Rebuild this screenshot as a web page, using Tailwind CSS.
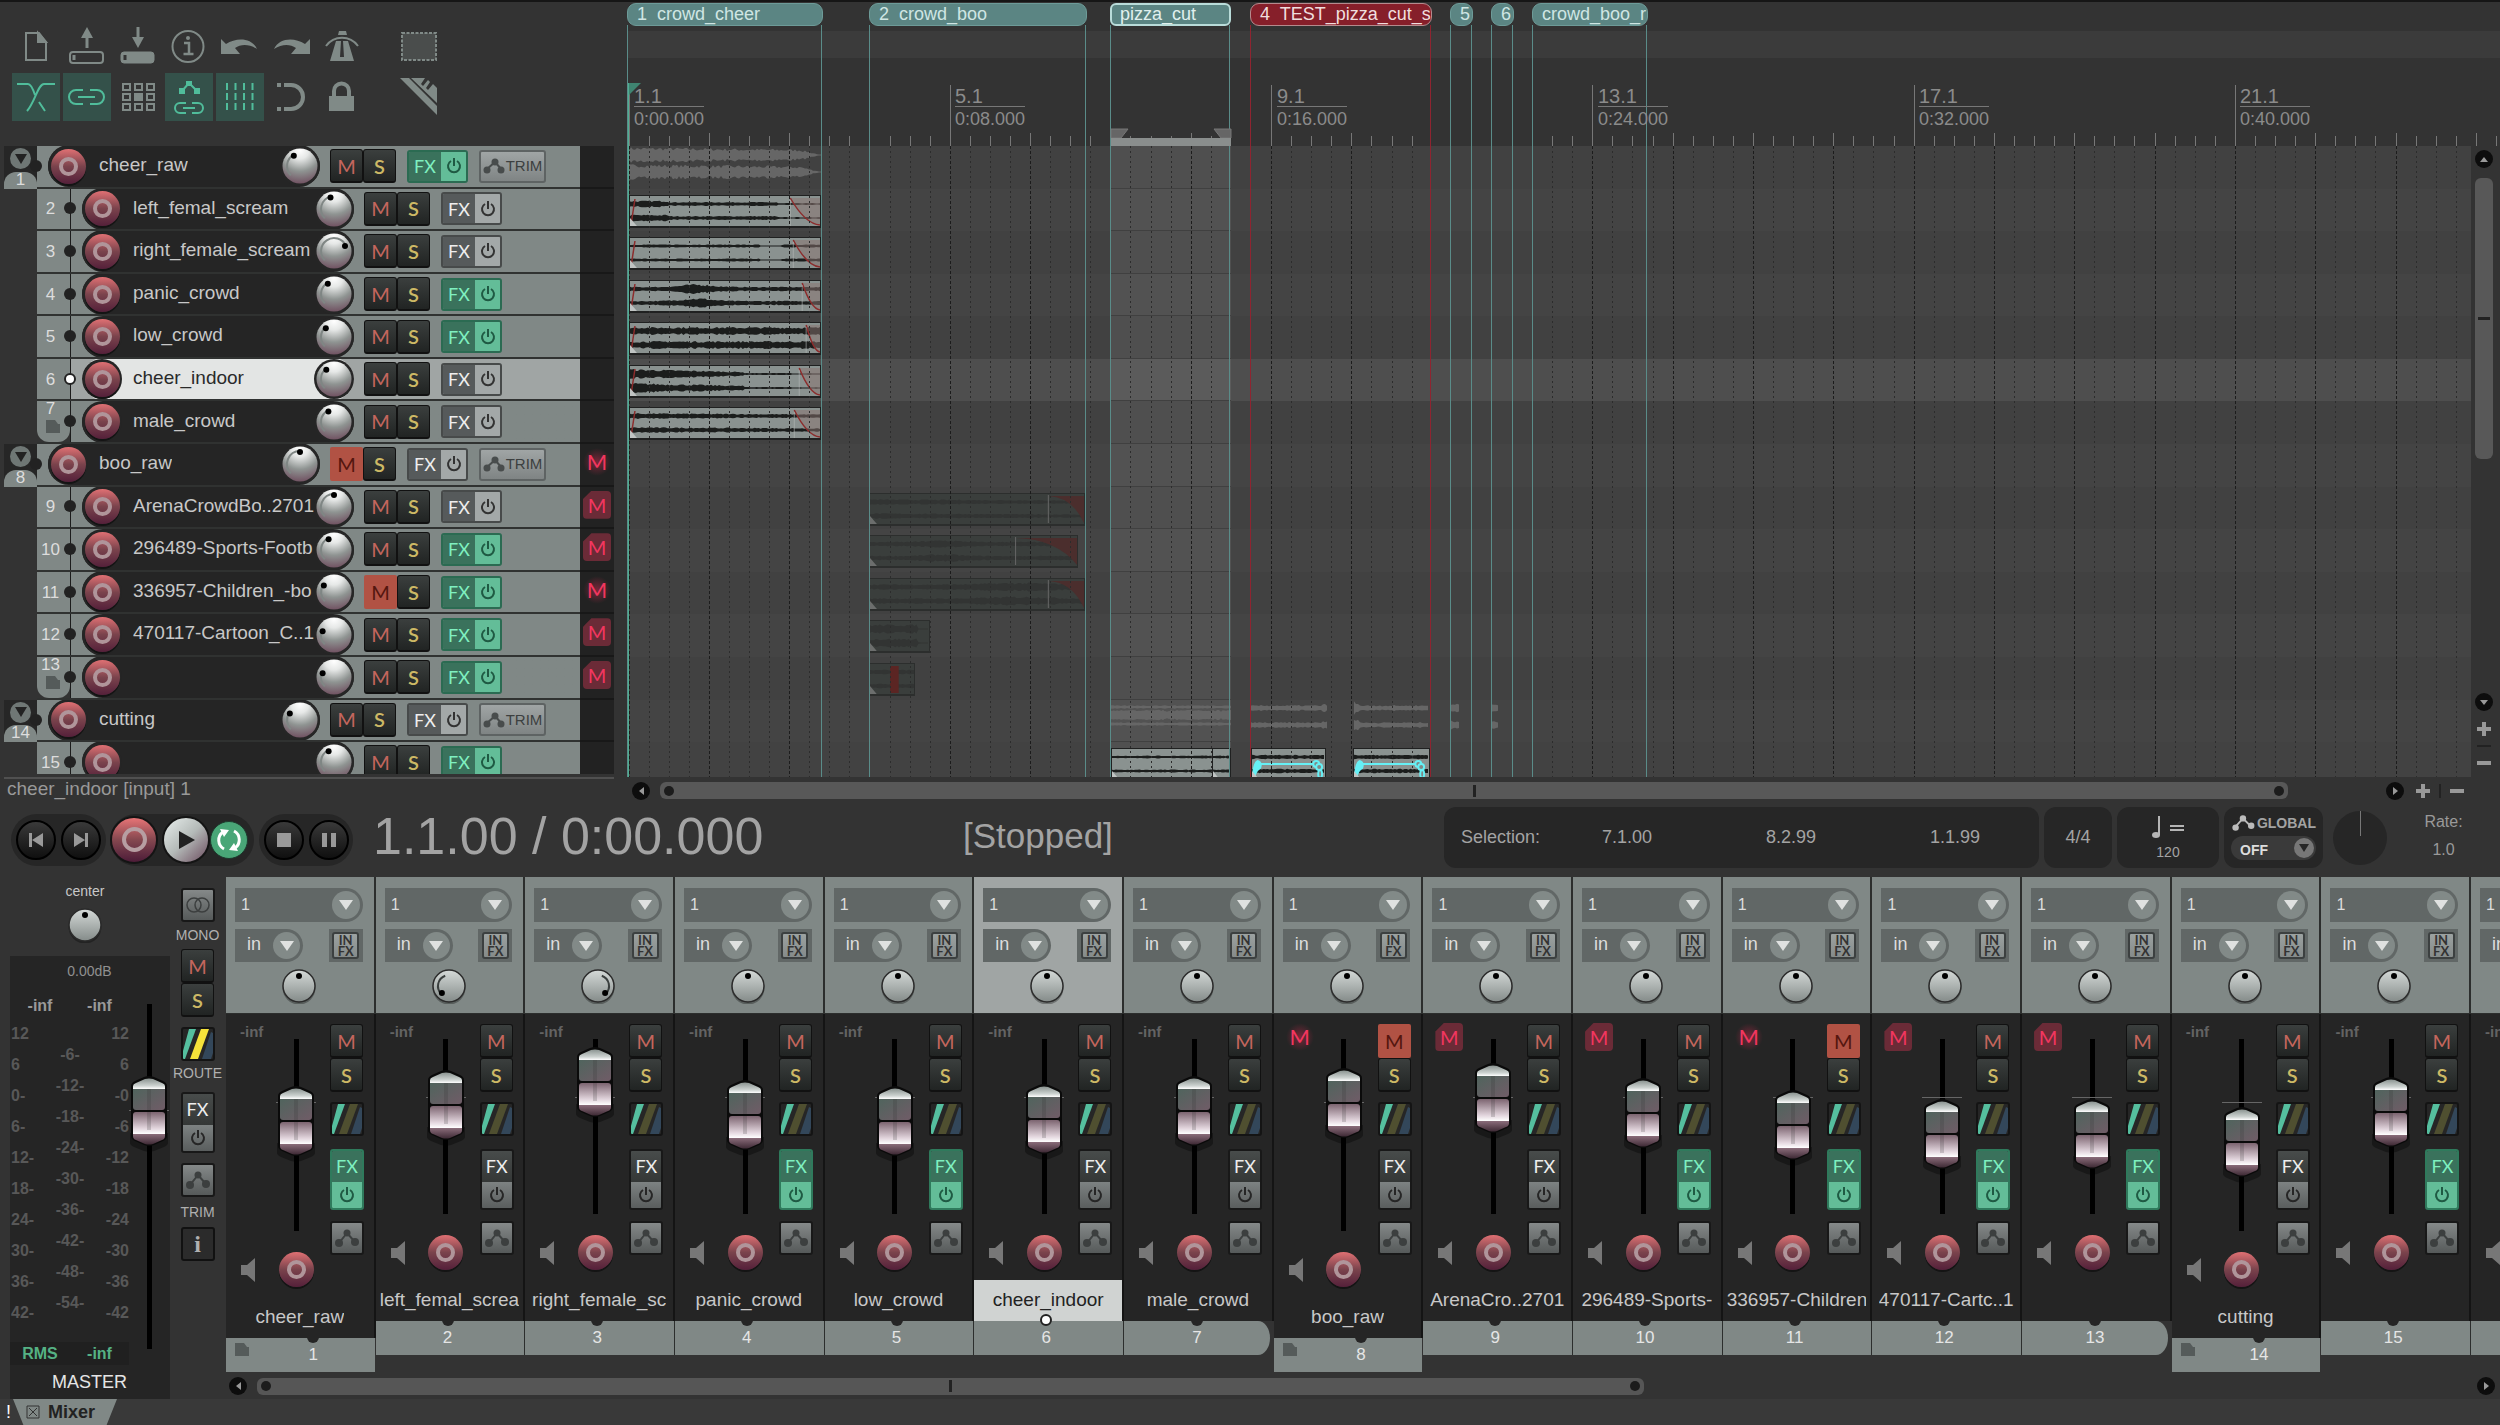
<!DOCTYPE html>
<html lang="en">

<head>
    <meta charset="UTF-8">
    <meta name="viewport" content="width=device-width, initial-scale=1.0">
    <title>Mixer</title>
    <script src="https://cdn.jsdelivr.net/npm/@tailwindcss/browser@4"></script>
</head>

<body class="h-screen overflow-hidden flex flex-col bg-[#333333] text-[#c8c8c8] font-['Liberation_Sans',Arial,sans-serif] border-t-2 border-[#161616]">
    <!-- Shared gradients -->
    <svg class="absolute size-0" aria-hidden="true">
        <defs>
            <radialGradient id="ball" cx="50%" cy="5%" r="100%">
                <stop offset="0" stop-color="#ffffff" />
                <stop offset=".25" stop-color="#e6e8e7" />
                <stop offset=".6" stop-color="#8f9492" />
                <stop offset="1" stop-color="#6d4a5c" />
            </radialGradient>
            <linearGradient id="silver" x1="0" y1="0" x2="0" y2="1">
                <stop offset="0" stop-color="#d5dad8" />
                <stop offset="1" stop-color="#848b89" />
            </linearGradient>
            <linearGradient id="capTop" x1="0" y1="0" x2="0" y2="1">
                <stop offset="0" stop-color="#8a9390" />
                <stop offset=".7" stop-color="#cdd3d1" />
                <stop offset="1" stop-color="#ffffff" />
            </linearGradient>
            <linearGradient id="capGlass" x1="0" y1="0" x2="1" y2="1">
                <stop offset="0" stop-color="#50645d" />
                <stop offset="1" stop-color="#705c67" />
            </linearGradient>
            <linearGradient id="capLow" x1="0" y1="0" x2="0" y2="1">
                <stop offset="0" stop-color="#7c6470" />
                <stop offset=".75" stop-color="#e3d6de" />
                <stop offset="1" stop-color="#ffffff" />
            </linearGradient>
            <linearGradient id="capEnd" x1="0" y1="0" x2="0" y2="1">
                <stop offset="0" stop-color="#8a6c7a" />
                <stop offset="1" stop-color="#3e2a35" />
            </linearGradient>
        </defs>
    </svg>

    <!-- Arrange view -->
    <main class="flex-1 min-h-0 flex">
        <div class="w-[627px] shrink-0 flex flex-col">
            <!-- Toolbar -->
            <div class="h-[144px] shrink-0 pl-3 pt-5 flex flex-col gap-[3px] text-[#808a87]">
                <div class="flex gap-[3px]">
                    <button class="size-12" aria-label="New project"><svg viewBox="0 0 48 48" fill="none" stroke="currentColor" stroke-width="2"><path d="M14 11h13l7 9v18H14z" /><path d="M26 11v9h8z" fill="currentColor" /></svg></button>
                    <button class="size-12" aria-label="Open project"><svg viewBox="0 0 48 48" fill="none" stroke="currentColor" stroke-width="2"><rect x="7" y="30" width="33" height="11" rx="3" /><path d="M11 33v5M24 26V14" stroke-width="3" /><path d="M24 5l6 11H18z" fill="currentColor" stroke="none" /></svg></button>
                    <button class="size-12" aria-label="Save project"><svg viewBox="0 0 48 48" fill="none" stroke="currentColor" stroke-width="3"><rect x="7" y="30" width="33" height="11" rx="3" fill="currentColor" stroke-width="1" /><path d="M11 33v5" stroke="#333" /><path d="M24 5v12" /><path d="M24 26l6-11H18z" fill="currentColor" stroke="none" /></svg></button>
                    <button class="size-12" aria-label="Project settings"><svg viewBox="0 0 48 48" fill="none" stroke="currentColor" stroke-width="2"><circle cx="23" cy="24.500" r="15.500" /><path d="M19 21h5v10M18.500 32h10" stroke-width="2.500" /><circle cx="23" cy="16" r="2" fill="currentColor" stroke="none" /></svg></button>
                    <button class="size-12" aria-label="Undo"><svg viewBox="0 0 48 48" fill="currentColor"><path d="M5 17l5 5c11-7 26-6 31 5-8-5-16-5-22-1l5 6H5z" /></svg></button>
                    <button class="size-12" aria-label="Redo"><svg viewBox="0 0 48 48" fill="currentColor"><path d="M43 17l-5 5C27 15 12 16 7 27c8-5 16-5 22-1l-5 6h19z" /></svg></button>
                    <button class="size-12" aria-label="Metronome"><svg viewBox="0 0 48 48" fill="currentColor"><path d="M21 9h7l1 4h-9zM18 19h5l-1 16h4l-1-16h5l6 20H12z" /><path d="M8 24c8-11 24-11 32 0" fill="none" stroke="currentColor" stroke-width="2" /></svg></button>
                    <span class="w-[22px]"></span>
                    <button class="size-12" aria-label="Marquee selection"><svg viewBox="0 0 48 48" fill="#4a4d4c" stroke="currentColor" stroke-width="2" stroke-dasharray="3 1.500"><path d="M8 11h34v27H8z" /></svg></button>
                </div>
                <div class="flex gap-[3px]">
                    <button class="size-12 bg-[#34514a] text-[#50bd9b]" aria-label="Auto crossfade"><svg viewBox="0 0 48 48" fill="none" stroke="currentColor" stroke-width="2"><path d="M5 11h11c3 0 5 5 7 11M27 29l6 9M43 11H32c-6 0-9 18-17 27" /></svg></button>
                    <button class="size-12 bg-[#34514a] text-[#50bd9b]" aria-label="Item grouping"><svg viewBox="0 0 48 48" fill="none" stroke="currentColor" stroke-width="2"><path d="M20 17h-7a7 7 0 000 14h7M27 17h7a7 7 0 010 14h-7M15 24h17" /></svg></button>
                    <button class="size-12" aria-label="Ripple editing"><svg viewBox="0 0 48 48" fill="none" stroke="currentColor" stroke-width="2"><path d="M9 11h7v6H9zM21 11h7v6h-7zM33 11h7v6h-7zM9 21h7v6H9zM33 21h7v6h-7zM9 31h7v6H9zM21 31h7v6h-7zM33 31h7v6h-7z" /><path d="M20 20h9v8h-9z" fill="currentColor" stroke="none" /></svg></button>
                    <button class="size-12 bg-[#34514a] text-[#50bd9b]" aria-label="Move envelopes with items"><svg viewBox="0 0 48 48" fill="none" stroke="currentColor" stroke-width="2"><path d="M17 18l7-8 8 8" /><path d="M14 15h6v6h-6zM21 8h6v5h-6zM29 15h6v6h-6z" fill="currentColor" stroke="none" /><path d="M21 30h-6a5 5 0 000 10h6M27 30h6a5 5 0 010 10h-6M18 35h12" /></svg></button>
                    <button class="size-12 bg-[#34514a] text-[#50bd9b]" aria-label="Grid lines"><svg viewBox="0 0 48 48" fill="none" stroke="currentColor" stroke-width="2" stroke-dasharray="7 3"><path d="M11 10v28M19.500 10v28M28 10v28M36.500 10v28" /></svg></button>
                    <button class="size-12" aria-label="Snap"><svg viewBox="0 0 48 48" fill="none" stroke="currentColor" stroke-width="4"><path d="M10 12h4M10 36h4M17 12h7a12 12 0 010 24h-7" /></svg></button>
                    <button class="size-12" aria-label="Lock"><svg viewBox="0 0 48 48" fill="currentColor"><path d="M11 23h25v15H11z" /><path d="M16 24v-6a7.500 7.500 0 0115 0v6" fill="none" stroke="currentColor" stroke-width="4" /></svg></button>
                    <span class="w-[22px]"></span>
                    <button class="size-12" aria-label="Actions"><svg viewBox="0 0 48 48" fill="currentColor"><path d="M6 5l37 37V33L15 5zM17 5h14l-4 6 2 2 5-6 2 2-4 6 2 2 5-6 4 4v15z" /></svg></button>
                </div>
            </div>
            <!-- Track panel -->
            <div class="flex-1 min-h-0 ml-1 w-[610px] mb-[3px] flex flex-col bg-[#333]" id="tracks"></div>
        </div>

        <!-- Timeline -->
        <div class="flex-1 min-w-0 flex flex-col relative overflow-hidden">
            <div class="h-[29px] shrink-0"></div>
            <div class="h-[27px] shrink-0 bg-[#3b3b3b]"></div>
            <div class="h-[88px] shrink-0"></div>
            <div class="flex-1 min-h-0 flex">
                <div class="flex-1 min-w-0 flex flex-col relative overflow-hidden" id="lanes"></div>
                <div class="w-[29px] shrink-0 flex flex-col items-center" id="vscroll">
                    <button class="mt-1 mr-1 size-[18px] rounded-full bg-[#0d0d0d] grid place-items-center" aria-label="Scroll up"><span class="border-x-4 border-x-transparent border-b-5 border-b-[#999]"></span></button>
                    <div class="mt-[10px] mr-1 w-[18px] h-[281px] rounded-md bg-[#585858] grid place-items-center"><span class="w-3 h-[3px] bg-[#222]"></span></div>
                    <span class="flex-1"></span>
                    <button class="mr-1 size-[18px] rounded-full bg-[#0d0d0d] grid place-items-center" aria-label="Scroll down"><span class="border-x-4 border-x-transparent border-t-5 border-t-[#999]"></span></button>
                    <button class="mt-[10px] mr-1 w-4 h-4" aria-label="Zoom in vertically"><svg viewBox="0 0 16 16"><path d="M8 1v14M1 8h14" stroke="#999" stroke-width="4" /></svg></button>
                    <span class="mt-2 mr-1 w-[14px] h-[2px] bg-[#222]"></span>
                    <button class="mt-2 mb-[6px] mr-1 w-4 h-4" aria-label="Zoom out vertically"><svg viewBox="0 0 16 16"><path d="M1 8h14" stroke="#999" stroke-width="4" /></svg></button>
                </div>
            </div>
            <div class="absolute inset-0 pointer-events-none" id="ruler"></div>
        </div>
    </main>

    <!-- Status line and horizontal scroll -->
    <div class="h-[23px] shrink-0 flex items-center">
        <div class="w-[610px] ml-1 pl-[3px] border-t-2 border-[#505050] -mt-px text-[19px] leading-[20px] text-[#999]">cheer_indoor [input] 1</div>
        <button class="ml-[18px] mt-1 size-[18px] rounded-full bg-[#0d0d0d] grid place-items-center" aria-label="Scroll left"><span class="border-y-4 border-y-transparent border-r-5 border-r-[#999]"></span></button>
        <div class="ml-[10px] mt-1 flex-1 h-[17px] rounded-md bg-[#585858] flex items-center justify-between px-1">
            <span class="size-[10px] rounded-full bg-[#1c1c1c]"></span><span class="w-[3px] h-3 bg-[#222]"></span><span class="size-[10px] rounded-full bg-[#1c1c1c]"></span>
        </div>
        <button class="ml-[98px] mt-1 size-[18px] rounded-full bg-[#0d0d0d] grid place-items-center" aria-label="Scroll right"><span class="border-y-4 border-y-transparent border-l-5 border-l-[#999]"></span></button>
        <button class="ml-[11px] mt-1 size-4" aria-label="Zoom in"><svg viewBox="0 0 16 16"><path d="M8 1v14M1 8h14" stroke="#999" stroke-width="4" /></svg></button>
        <span class="ml-2 mt-1 w-[2px] h-[14px] bg-[#222]"></span>
        <button class="ml-2 mr-[35px] mt-1 size-4" aria-label="Zoom out"><svg viewBox="0 0 16 16"><path d="M1 8h14" stroke="#999" stroke-width="4" /></svg></button>
    </div>

    <!-- Transport -->
    <div class="h-[77px] shrink-0 flex items-center pb-[2px]">
        <div class="ml-[11px] h-[52px] w-[95px] rounded-full bg-[#262626] flex items-center gap-[5px] pl-[5px] mt-1">
            <button class="size-10 rounded-full bg-linear-to-b from-[#3a3a3a] to-[#101010] border-2 border-black grid place-items-center" aria-label="Go to start"><svg class="size-4" viewBox="0 0 16 16" fill="#999"><path d="M1 1h3v14H1zM15 1v14L4 8z" /></svg></button>
            <button class="size-10 rounded-full bg-linear-to-b from-[#3a3a3a] to-[#101010] border-2 border-black grid place-items-center" aria-label="Go to end"><svg class="size-4" viewBox="0 0 16 16" fill="#999"><path d="M12 1h3v14h-3zM1 1v14l11-7z" /></svg></button>
        </div>
        <div class="ml-1 h-[52px] w-[144px] rounded-full bg-[#262626] flex items-center mt-1">
            <button class="size-12 shrink-0 rounded-full bg-linear-to-b from-[#e87476] via-[#84474f] to-[#4d1c38] border-2 border-[#141414] grid place-items-center" aria-label="Record"><span class="size-[25px] rounded-full border-4 border-[#b79ea2]"></span></button>
            <button class="ml-1 size-12 shrink-0 rounded-full bg-linear-to-br from-[#e9efed] via-[#b4bab8] to-[#6b4e60] border-2 border-[#141414] grid place-items-center" aria-label="Play"><svg class="size-5" viewBox="0 0 20 20" fill="#222"><path d="M3 1l16 9-16 9z" /></svg></button>
            <button class="size-[38px] shrink-0 rounded-full bg-[#49a677] border border-[#1d3a2d] grid place-items-center" aria-label="Repeat"><svg class="size-7" viewBox="0 0 28 28" fill="none" stroke="#fff" stroke-width="3"><path d="M19 5a10 10 0 011 17M9 23A10 10 0 018 6" /><path d="M5 3l9 1-5 7zM23 25l-9-1 5-7z" fill="#fff" stroke="none" /></svg></button>
        </div>
        <div class="ml-[5px] h-[52px] w-[94px] rounded-full bg-[#262626] flex items-center gap-[5px] pl-[5px] mt-1">
            <button class="size-10 rounded-full bg-linear-to-b from-[#3a3a3a] to-[#101010] border-2 border-black grid place-items-center" aria-label="Stop"><span class="size-[14px] bg-[#999]"></span></button>
            <button class="size-10 rounded-full bg-linear-to-b from-[#3a3a3a] to-[#101010] border-2 border-black grid place-items-center" aria-label="Pause"><span class="w-[14px] h-[14px] border-x-5 border-[#999]"></span></button>
        </div>
        <div class="ml-5 w-[590px] shrink-0 pb-1 text-[52px] leading-none text-[#a3a3a3]">1.1.00 / 0:00.000</div>
        <div class="pb-1 text-[35px] leading-none text-[#a3a3a3]">[Stopped]</div>
        <div class="flex-1"></div>
        <div class="flex gap-[5px] text-[18px] text-[#a3a3a3]">
            <div class="h-[61px] w-[595px] rounded-xl bg-[#262626] flex items-center pl-[17px]">
                <span class="w-[84px]">Selection:</span><span class="w-[164px] text-center">7.1.00</span><span class="w-[164px] text-center">8.2.99</span><span class="w-[164px] text-center">1.1.99</span>
            </div>
            <div class="h-[61px] w-[68px] rounded-xl bg-[#262626] grid place-items-center">4/4</div>
            <div class="h-[61px] w-[102px] rounded-xl bg-[#262626] flex flex-col items-center justify-center text-[14px] leading-4 gap-[6px]">
                <svg class="w-[34px] h-[22px]" viewBox="0 0 34 22"><ellipse cx="5" cy="19" rx="4" ry="3" fill="#b5b5b5" /><path d="M8 19V0M19 10h14M19 14h14" stroke="#b5b5b5" stroke-width="2" /></svg>
                <span>120</span>
            </div>
            <div class="h-[61px] w-[99px] rounded-xl bg-[#262626] px-[7px] pt-[7px] font-['Liberation_Sans_Narrow','Liberation_Sans',sans-serif] font-bold">
                <div class="flex items-center gap-[2px] text-[14px] leading-[18px]"><svg class="w-[26px] h-[18px]" viewBox="0 0 26 18"><path d="M5 13l8-9 8 8" stroke="#bbb" stroke-width="2" fill="none" /><g fill="#bbb"><circle cx="5" cy="14" r="3.500" /><circle cx="13" cy="4" r="3.500" /><circle cx="22" cy="12" r="3.500" /></g></svg>GLOBAL</div>
                <div class="relative mt-1 h-6 rounded-full bg-[#3a3a3a]">
                    <select class="w-full h-6 pl-[9px] text-[14px] text-[#ddd] appearance-none" aria-label="Global automation override"><option>OFF</option></select>
                    <span class="absolute right-[2px] top-[2px] size-5 rounded-full bg-[#777] grid place-items-center pointer-events-none"><span class="border-x-5 border-x-transparent border-t-8 border-t-[#262626]"></span></span>
                </div>
            </div>
        </div>
        <div class="relative ml-[10px] size-[54px] rounded-full bg-[#262626] flex justify-center"><span class="w-px h-[25px] bg-[#777]"></span><input type="range" class="absolute inset-0 w-full opacity-0" aria-label="Play rate"></div>
        <div class="w-[113px] pb-1 text-center text-[16px] leading-7 text-[#999]">Rate:<br>1.0</div>
    </div>

    <!-- Mixer -->
    <section class="h-[522px] shrink-0 flex">
        <div class="w-[226px] shrink-0 flex">
            <div class="w-[170px] flex flex-col">
                <div class="h-[79px] flex flex-col items-center pt-1">
                    <span class="text-[14px] leading-5">center</span>
                    <div class="mt-[6px]" id="masterpan"></div>
                </div>
                <div class="ml-[10px] flex-1 bg-[#252525] relative flex">
                    <div class="w-[119px] flex flex-col pt-[7px]">
                        <div class="text-[14px] leading-4 text-[#909090] text-center pl-10">0.00dB</div>
                        <div class="flex mt-[18px] text-[16px] leading-[18px] font-bold text-[#999]"><span class="w-[60px] text-center">-inf</span><span class="w-[59px] text-center">-inf</span></div>
                        <div class="flex justify-between mt-[3px] pl-px text-[16px] font-bold text-[#585858]" id="scale"></div>
                        <div class="mt-auto h-[23px] bg-[#202020] flex items-center text-[16px] font-bold text-[#55b184]"><span class="w-[60px] text-center">RMS</span><span class="w-[59px] text-center">-inf</span></div>
                        <div class="text-[18px] leading-[34px] text-[#e5e5e5] text-center pl-10">MASTER</div>
                    </div>
                    <div class="w-10 pt-12" id="masterfader"></div>
                </div>
            </div>
            <div class="ml-[10px] w-[35px] flex flex-col items-center pt-[11px] font-['Liberation_Sans_Narrow','Liberation_Sans',sans-serif] text-[14px] text-[#b0b0b0]" id="masterbuttons"></div>
        </div>
        <div class="flex-1 min-w-0 flex flex-col">
            <div class="h-[495px] flex items-start" id="strips"></div>
            <div class="mt-1 flex items-center h-5">
                <button class="ml-[3px] size-[18px] rounded-full bg-[#0d0d0d] grid place-items-center" aria-label="Scroll mixer left"><span class="border-y-4 border-y-transparent border-r-5 border-r-[#999]"></span></button>
                <div class="ml-[10px] w-[61%] h-[17px] rounded-md bg-[#565656] flex items-center justify-between px-1">
                    <span class="size-[10px] rounded-full bg-[#1c1c1c]"></span><span class="w-[3px] h-3 bg-[#222]"></span><span class="size-[10px] rounded-full bg-[#1c1c1c]"></span>
                </div>
                <span class="flex-1"></span>
                <button class="mr-[5px] size-[18px] rounded-full bg-[#0d0d0d] grid place-items-center" aria-label="Scroll mixer right"><span class="border-y-4 border-y-transparent border-l-5 border-l-[#999]"></span></button>
            </div>
        </div>
    </section>

    <!-- Docker tabs -->
    <div class="h-[26px] shrink-0 bg-[#393939] flex items-center">
        <span class="w-[13px] pl-[6px] text-[18px] text-white">!</span>
        <button class="w-[104px] h-[26px] bg-[#808886] [clip-path:polygon(0_0,100%_0,90%_100%,10%_100%)] flex items-center pl-[13px] gap-2 text-[18px] font-bold text-[#222]">
            <svg class="size-[14px]" viewBox="0 0 14 14" fill="none" stroke="#333"><path d="M1 1h12v12H1zM3 3l8 8M11 3l-8 8" /></svg>Mixer
        </button>
    </div>

    <script>
        // vol = track panel knob angle, cap = fader cap offset on its rail
        const tracks = [
            { n: 1, name: 'cheer_raw', folder: true, vol: -31, cap: 46, fx: true },
            { n: 2, name: 'left_femal_scream', vol: -17, cap: 30, pan: -135 },
            { n: 3, name: 'right_female_scream', short: 'right_female_sc', vol: 66, cap: 7, pan: 135 },
            { n: 4, name: 'panic_crowd', vol: -31, cap: 40, fx: true },
            { n: 5, name: 'low_crowd', vol: -43, cap: 46, fx: true },
            { n: 6, name: 'cheer_indoor', vol: -40, cap: 44, selected: true },
            { n: 7, name: 'male_crowd', vol: -28, cap: 36, last: true },
            { n: 8, name: 'boo_raw', folder: true, vol: 0, cap: 28, muted: true },
            { n: 9, name: 'ArenaCrowdBo', tail: '..2701', short: 'ArenaCro', vol: 0, cap: 23, implied: true },
            { n: 10, name: '296489-Sports-Footb', short: '296489-Sports-', vol: -27, cap: 38, fx: true, implied: true },
            { n: 11, name: '336957-Children_-bo', short: '336957-Children', vol: -58, cap: 50, fx: true, muted: true },
            { n: 12, name: '470117-Cartoon_C', tail: '..1', short: '470117-Cartc', vol: -72, cap: 59, fx: true, implied: true },
            { n: 13, name: '', vol: -72, cap: 59, fx: true, implied: true, last: true },
            { n: 14, name: 'cutting', folder: true, vol: -58, cap: 67 },
            { n: 15, name: '', vol: -27, cap: 37, fx: true },
            { n: 16, name: '', vol: 0, cap: 37, fx: true, cut: true },
        ];

        const rec = (n) => `<button class="size-[35px] shrink-0 rounded-full bg-linear-to-b from-[#e07073] via-[#7a434c] to-[#55203a] shadow-[0_2px_0_#141414] grid place-items-center" aria-label="Record arm track ${n}"><span class="size-[19px] rounded-full border-4 border-[#b0959a]"></span></button>`;

        function polar(c, r, deg) {
            const a = (deg - 90) * Math.PI / 180;
            return `${(c + r * Math.cos(a)).toFixed(1)} ${(c + r * Math.sin(a)).toFixed(1)}`;
        }

        function volKnob(n, deg) {
            const [x, y] = polar(20, 12, deg).split(' ');
            const big = deg > 45 ? 1 : 0;
            return `<span class="relative size-10 shrink-0"><svg viewBox="0 0 40 40"><circle cx="20" cy="20" r="20" fill="#262626" /><circle cx="20" cy="20" r="17.500" fill="url(#ball)" />
                <path d="M${polar(20, 13, -135)}A13 13 0 ${big} 1 ${polar(20, 13, deg)}" fill="none" stroke="#7f8684" stroke-width="2" /><circle cx="${x}" cy="${y}" r="3" fill="#000" /></svg>
                <input type="range" class="absolute inset-0 w-full opacity-0" aria-label="Volume track ${n}"></span>`;
        }

        function panKnob(label, deg) {
            const mark = deg
                ? `<path d="M${polar(18, 11, deg > 0 ? 20 : -20)}A11 11 0 0 ${deg > 0 ? 1 : 0} ${polar(18, 11, deg)}" fill="none" stroke="#3a3f3e" stroke-width="2" />`
                : '';
            const [x, y] = polar(18, 10, deg || 0).split(' ');
            return `<span class="relative block size-9"><svg viewBox="0 0 36 36"><circle cx="18" cy="20" r="16.500" fill="#000" opacity=".3" /><circle cx="18" cy="18" r="16" fill="url(#silver)" stroke="#2b2b2b" stroke-width="1.500" />${mark}<circle cx="${x}" cy="${y}" r="3" fill="#000" /></svg>
                <input type="range" class="absolute inset-0 w-full opacity-0" aria-label="${label}"></span>`;
        }

        const power = '<svg class="size-4" viewBox="0 0 16 16" fill="none" stroke="currentColor" stroke-width="2"><path d="M5 3a6 6 0 106 0M8 0v8" /></svg>';
        const envelope = '<svg class="w-6 h-[18px]" viewBox="0 0 24 18" fill="#3c3f3f"><path d="M4 14l8-10 8 9" fill="none" stroke="#3c3f3f" stroke-width="2" /><circle cx="4" cy="14" r="4" /><circle cx="12" cy="4" r="3.500" /><circle cx="20" cy="13" r="4" /></svg>';

        const muteBtn = (on) => `<button class="${on
            ? 'w-[33px] h-[34px] shrink-0 rounded-[2px] bg-[#b15244] text-[#54160f] text-[20px] leading-none font-[Lato,sans-serif]'
            : 'w-[33px] h-[34px] shrink-0 rounded-[3px] bg-linear-to-b from-[#3b3f3e] to-[#212423] border border-[#111] border-b-2 text-[#c4665d] text-[20px] leading-none font-[Lato,sans-serif]'}">M</button>`;
        const soloBtn = '<button class="w-[33px] h-[34px] shrink-0 rounded-[3px] bg-linear-to-b from-[#3b3f3e] to-[#212423] border border-[#111] border-b-2 text-[#cdb965] text-[20px] leading-none font-semibold font-[Lato,sans-serif]">S</button>';

        const fxRow = (on) => `<div class="${on
            ? 'ml-[11px] flex w-[61px] h-[33px] rounded-[3px] border-2 border-[#2b6b52] overflow-hidden text-[#7ff0c0] font-[Lato,sans-serif]'
            : 'ml-[11px] flex w-[61px] h-[33px] rounded-[3px] border-2 border-[#474a4a] overflow-hidden text-[#eee] font-[Lato,sans-serif]'}">
            <button class="${on ? 'w-8 bg-[#3a725c] text-[18px] leading-none' : 'w-8 bg-[#565a5b] text-[18px] leading-none'}">FX</button>
            <button class="${on ? 'flex-1 bg-[#63bd98] text-[#1f5a43] grid place-items-center' : 'flex-1 bg-[#a3a8a8] text-[#333] grid place-items-center'}" aria-label="FX bypass">${power}</button></div>`;

        const fxCol = (on) => `<div class="${on
            ? 'flex flex-col w-[34px] h-[61px] rounded-[3px] border-2 border-[#2f7a5c] overflow-hidden text-[#7ff0c0] font-[Lato,sans-serif]'
            : 'flex flex-col w-[34px] h-[61px] rounded-[3px] border-2 border-[#181818] overflow-hidden text-[#eee] font-[Lato,sans-serif]'}">
            <button class="${on ? 'h-[31px] pb-[2px] bg-[#3a725c] text-[18px] leading-none' : 'h-[31px] pb-[2px] bg-linear-to-b from-[#484c4b] to-[#343736] text-[18px] leading-none'}">FX</button>
            <button class="${on ? 'flex-1 bg-[#63bd98] text-[#1f5a43] grid place-items-center' : 'flex-1 bg-linear-to-b from-[#7d8282] to-[#5a5e5e] text-[#262626] grid place-items-center'}" aria-label="FX bypass">${power}</button></div>`;

        const envBtn = '<button class="w-[34px] h-[34px] rounded-[3px] border-2 border-[#181818] bg-linear-to-b from-[#858989] to-[#565a5a] grid place-items-center" aria-label="Envelopes">' + envelope + '</button>';
        const routeBtn = (mid) => `<button class="w-[34px] h-[34px] rounded-[3px] border-2 border-[#141414] bg-[#262626] overflow-hidden" aria-label="Routing"><svg viewBox="0 0 30 30"><path d="M0 22V30H2L13 0H6z" fill="#55bf9f" /><path d="M7 30h8L26 0h-8z" fill="${mid}" /><path d="M19 30h9L30 24V4L28 3z" fill="#33475a" /></svg></button>`;

        const badge = (t) => t.muted
            ? `<span class="size-7 grid place-items-center text-[22px] leading-none text-[#f2365f] font-[Lato,sans-serif] bg-radial from-[#7a2639] to-transparent to-70%">M</span>`
            : t.implied ? `<span class="size-7 grid place-items-center text-[20px] leading-none text-[#f2365f] font-[Lato,sans-serif] bg-[#6b2b37] rounded-sm [clip-path:polygon(30%_0,100%_0,100%_100%,0_100%,0_30%)]">M</span>` : '';

        const folderIcon = '<svg class="w-[14px] h-[13px]" viewBox="0 0 14 13" fill="#555b5a"><path d="M0 0h9l3 4h2v9H0z" /></svg>';

        function fader(cap, zero) {
            return `<div class="relative w-full h-full flex justify-center">
                <span class="w-[5px] h-full bg-black"></span>
                <span class="absolute left-0 w-10 h-px bg-[#666]" style="top:${zero}px"></span>
                <svg class="absolute left-[1px] w-[38px] h-[78px]" style="top:${cap}px" viewBox="0 0 38 78">
                    <path d="M0 58v10q0 2 4 4l10 4q5 1 10 0l10-4q4-2 4-4V58z" fill="#000" opacity=".35" />
                    <path d="M1 11q0-3 4-5l9-4q5-2 10 0l9 4q4 2 4 5v50q0 3-4 5l-9 4q-5 2-10 0l-9-4q-4-2-4-5z" fill="#0a0a0a" />
                    <path d="M3 11q0-2 3-3l9-4q4-1 8 0l9 4q3 1 3 3v3H3z" fill="url(#capTop)" />
                    <path d="M3 14h32v18q0 3-3 3H6q-3 0-3-3z" fill="url(#capGlass)" />
                    <path d="M3 40q0-3 3-3h26q3 0 3 3v19H3z" fill="url(#capLow)" />
                    <path d="M3 59h32v2q0 3-3 4l-9 4q-4 1-8 0l-9-4q-3-1-3-4z" fill="url(#capEnd)" />
                    <path d="M19 14v21M19 37v18" stroke="#333" stroke-width="4" opacity=".2" />
                </svg>
                <input type="range" class="absolute inset-0 w-full h-full opacity-0 [writing-mode:vertical-lr]" aria-label="Fader">
            </div>`;
        }

        // Track panel rows
        document.getElementById('tracks').innerHTML = tracks.slice(0, 15).map(t => {
            const gutter = t.folder
                ? `<div class="relative w-[33px] bg-[#262626] flex flex-col items-center justify-between"><button class="mt-[2px] size-[21px] rounded-full bg-[#6f7775] grid place-items-center" aria-label="Collapse"><span class="border-x-6 border-x-transparent border-t-10 border-t-[#222]"></span></button>
                    <span class="w-full h-[17px] rounded-t-xl bg-[#808886] text-center text-[17px] leading-[16px] text-[#ddd]">${t.n}</span><span class="absolute z-10 -right-[5px] top-[14px] size-3 rounded-full bg-[#222]"></span></div>`
                : '<div class="w-[33px]"></div>';
            const num = t.folder ? ''
                : t.last ? `<div class="w-[33px] pr-[6px] shrink-0 h-full flex flex-col items-center bg-[#808886] rounded-b-xl text-[17px] leading-[16px] text-[#ddd]">${t.n}<span class="ml-1 mt-[3px]">${folderIcon}</span></div>`
                    : `<div class="w-[33px] pr-[6px] shrink-0 h-full grid place-items-center bg-[#808886] text-[17px] leading-none text-[#ddd]">${t.n}</div>`;
            const dot = t.folder ? '' : `<div class="relative w-px h-[43px] shrink-0 bg-[#1c1c1c]"><span class="${t.selected ? 'absolute -left-[6px] top-[15px] size-3 rounded-full bg-white border-2 border-[#222]' : 'absolute -left-[6px] top-[15px] size-3 rounded-full bg-[#222]'}"></span></div>`;
            const trim = t.folder ? `<button class="ml-[11px] w-[67px] h-[33px] rounded-[3px] border-2 border-[#5e6363] bg-linear-to-b from-[#a0a5a5] to-[#7f8484] flex items-center justify-center gap-px text-[15px] text-[#3c4040] font-['Liberation_Sans_Narrow','Liberation_Sans',sans-serif]"><svg class="w-[22px] h-4" viewBox="0 0 22 16" fill="#484c4c"><path d="M3 12l9-8 7 8" fill="none" stroke="#484c4c" stroke-width="2" /><circle cx="4" cy="12" r="3.500" /><circle cx="12" cy="4" r="3.500" /><circle cx="18" cy="12" r="3.500" /></svg>TRIM</button>` : '';
            const name = `<span class="flex min-w-0 ml-[11px] flex-1 overflow-hidden whitespace-nowrap pb-[2px]"><span class="overflow-hidden">${t.name}</span><span>${t.tail || ''}</span></span>`;
            return `<div class="${t.n === 15 ? 'h-8 shrink-0 overflow-hidden' : 'flex-1 min-h-0 overflow-hidden'}"><div class="${t.n === 15 ? 'h-[42px] flex' : 'h-full flex'}">
                ${gutter}
                <div class="${t.last ? 'flex-1 flex items-center overflow-hidden border-b-2 border-[#303231] bg-linear-to-r from-[#333] from-6% to-[#808886] to-6%' : t.selected ? 'flex-1 flex items-center overflow-hidden border-b-2 border-[#303231] bg-[#a0a5a4]' : 'flex-1 flex items-center overflow-hidden border-b-2 border-[#303231] bg-[#808886]'}">
                    ${num}${dot}
                    <div class="${t.selected ? 'relative ml-[11px] w-[272px] h-[42px] shrink-0 rounded-full bg-[#e3e5e4] flex items-center text-[19px] text-[#2a2a2a]' : 'ml-[11px] w-[272px] h-[42px] shrink-0 rounded-full bg-[#252525] flex items-center text-[19px] text-[#c8c8c8]'}">
                        <span class="size-10 shrink-0 rounded-full bg-[#252525] grid place-items-center">${rec(t.n)}</span>${name}${volKnob(t.n, t.vol)}
                    </div>
                    <div class="flex ml-[10px]">${muteBtn(t.muted)}${soloBtn}</div>
                    ${fxRow(t.fx)}${trim}
                </div>
                <div class="w-[34px] shrink-0 pt-1 pl-[3px] bg-[#222] border-b-2 border-[#181818]">${badge(t)}</div>
            </div></div>`;
        }).join('');

        // Waveform outline around a centre line; shape(t) gives the envelope
        let seed = 7;
        const rnd = () => (seed = (seed * 16807) % 2147483647) / 2147483647;
        function wave(w, y, shape) {
            let up = '', down = '';
            for (let x = 0; x <= w; x += 2) {
                const a = Math.max(.5, shape(x / w) * (.65 + rnd() * .5));
                up += `L${x} ${(y - a).toFixed(1)}`;
                down = `L${x} ${(y + a).toFixed(1)}` + down;
            }
            return `M0 ${y}${up}${down}Z`;
        }
        function clip(x, w, o) {
            const paths = [8, 22].map(y => `<path d="${wave(w, y, o.shape)}" fill="${o.dim ? '#323433' : '#1b1d1c'}" />`).join('');
            const f = o.fade || 0;
            const fade = !f ? '' : o.dim
                ? `<path d="M${w - f} 2Q${w - f / 3} 3 ${w} 29V2z" fill="#4b2e2d" /><path d="M${w - f} 1v28" stroke="#666" />`
                : `<path d="M${w - f} 2Q${w - f / 2} 28 ${w} 29V2z" fill="#8a7470" opacity=".5" /><path d="M${w - f} 2Q${w - f / 2} 28 ${w} 29M1 29L5 3" stroke="#8c2c2c" stroke-width="1.500" fill="none" /><path d="M${w - f} 4v26" stroke="#b5b9b8" opacity=".6" />`;
            return `<svg class="${o.dim ? 'absolute top-[6px] h-[33px] bg-[#3a3e3c] border border-b-2 border-[#2c2e2d]' : 'absolute top-[6px] h-[33px] bg-[#8a9290] border border-b-2 border-[#202121]'}" style="left:${x}px;width:${w}px" viewBox="0 0 ${w} 30" preserveAspectRatio="none">${paths}${fade}${o.extra || ''}<path d="M0 22v8h7z" fill="${o.dim ? '#6c6e6d' : '#c0c4c3'}" /></svg>`;
        }
        function ghost(x, w, shape, y1, y2) {
            return `<svg class="absolute top-0 h-10" style="left:${x}px;width:${w}px" viewBox="0 0 ${w} 40"><path d="${wave(w, y1, shape)}${wave(w, y2, shape)}" fill="#666" /></svg>`;
        }
        const cyan = '<path d="M8 15h56" stroke="#66f0f5" stroke-width="2" /><path d="M0 31C0 20 2 12 6 11q6 2 3 9Q4 22 3 31z" fill="#66f0f5" /><g fill="#808886" stroke="#66f0f5" stroke-width="2"><circle cx="66" cy="15" r="3" /><circle cx="69" cy="18" r="3" /><ellipse cx="70" cy="25" rx="2" ry="4" /></g>';
        const items = {
            1: ghost(2, 192, t => t > .9 ? 6 * (1 - t) * 10 * .8 : 7 - t * 2, 9, 26),
            2: clip(2, 192, { fade: 30, shape: t => t > .78 ? .8 : t < .2 ? 3 : 1.8 }),
            3: clip(2, 192, { fade: 27, shape: t => t > .68 && t < .8 ? .5 : 1.4 }),
            4: clip(2, 192, { fade: 18, shape: t => 2 + 2.500 * Math.exp(-Math.pow((t - .35) * 9, 2)) }),
            5: clip(2, 192, { fade: 14, shape: () => 3.500 }),
            6: clip(2, 192, { fade: 21, shape: t => t < .6 ? 4.500 - t * 4 : t < .85 ? 1 : .6 }),
            7: clip(2, 192, { fade: 26, shape: t => 2.600 - t }),
            9: clip(242, 216, { dim: true, fade: 36, shape: t => 2.500 - t }),
            10: clip(242, 209, { dim: true, fade: 62, shape: t => 2 + 1.500 * Math.exp(-Math.pow((t - .35) * 9, 2)) }),
            11: clip(242, 216, { dim: true, fade: 36, shape: t => 2.500 + 1.500 * Math.exp(-Math.pow((t - .7) * 5, 2)) }),
            12: clip(242, 61, { dim: true, shape: t => t < .8 ? 4 : .6 }),
            13: clip(242, 46, { dim: true, shape: () => 2, extra: '<path d="M21 2h9v27h-9z" fill="#5b2523" />' }),
            14: ghost(484, 120, () => 1.500, 7, 24) + ghost(484, 120, () => 4.500, 15, 15) + ghost(624, 77, t => t > .92 ? 3.500 : 2.500, 8, 25)
                + ghost(727, 75, t => t < .06 ? 6 : 2.500, 8, 25) + ghost(824, 9, () => 4, 8, 25) + ghost(865, 7, t => 5 - t * 3, 8, 25),
            15: clip(484, 102, { shape: () => 1.300 }) + clip(585, 19, { shape: () => 1.300 })
                + clip(624, 75, { shape: () => 2, extra: cyan }) + clip(726, 77, { shape: () => 2, extra: cyan }),
        };

        const regions = [
            [0, 196, '1&nbsp; crowd_cheer'], [242, 218, '2&nbsp; crowd_boo'], [483, 121, 'pizza_cut', 'sel'],
            [623, 182, '4&nbsp; TEST_pizza_cut_s', 'red'], [823, 23, '5'], [864, 23, '6'], [905, 116, 'crowd_boo_r'],
        ];
        const edges = regions.flatMap(([x, w, , kind]) => [x, x + w - 2].map(e => [e, kind === 'red' ? '#8f2430' : '#5a8c89']));

        // Beat grid and ruler
        const beat = 20.080;
        let grid = '', ticks = '', labels = '';
        for (let b = 0; b < 94; b++) {
            const x = Math.round(1.500 + b * beat);
            const measure = b % 4 === 0;
            if (b && edges.some(([e]) => Math.abs(e - x) < 3)) continue;
            grid += `<line x1="${x + .5}" x2="${x + .5}" y1="0" y2="100%" stroke="${measure ? '#1c1c1c' : '#2c2c2c'}" stroke-dasharray="${measure ? '3 2' : '2 3'}" />`;
            const top = b % 16 === 0 ? 83 : measure ? 131 : 134;
            ticks += `<line x1="${x + .5}" x2="${x + .5}" y1="${top}" y2="144" stroke="#777" />`;
        }
        for (let i = 0; i < 6; i++) {
            labels += `<div class="absolute top-[84px] w-[70px] text-[#8b8b8b]" style="left:${Math.round(7 + i * beat * 16)}px"><div class="text-[20px] leading-5 border-b border-[#777]">${i * 4 + 1}.1</div><div class="text-[18px] leading-6">0:${String(i * 8).padStart(2, '0')}.000</div></div>`;
        }

        document.getElementById('lanes').innerHTML = tracks.slice(0, 15).map(t =>
            `<div class="${t.n === 15 ? 'relative h-[35px] shrink-0 overflow-hidden bg-[#424242]' : t.selected ? 'relative flex-1 min-h-0 bg-[#4e4e4e]' : t.n % 2 ? 'relative flex-1 min-h-0 bg-[#414141]' : 'relative flex-1 min-h-0 bg-[#444444]'}">
                <div class="absolute left-[484px] w-[120px] inset-y-0 bg-white/8 border-b border-[#404040]"></div>${items[t.n] || ''}</div>`).join('')
            + `<svg class="absolute inset-0 w-full h-full">${grid}</svg>`;

        document.getElementById('ruler').innerHTML = `<svg class="absolute inset-0 w-full h-full">${ticks}
            ${edges.map(([x, c]) => `<line x1="${x + .5}" x2="${x + .5}" y1="23" y2="100%" stroke="${c}" />`).join('')}
            <path d="M484 127h17l-7 9h-10zM604 127h-17l7 9h10z" fill="#666" stroke="#777" /><path d="M484 136h120v8H484z" fill="#8a8e8d" />
            <path d="M1 81h13L1 94z" fill="#3f8471" /><line x1="1.500" x2="1.500" y1="81" y2="100%" stroke="#4fae92" /></svg>${labels}
            ${regions.map(([x, w, text, kind]) => `<div class="${kind === 'sel' ? 'absolute top-px h-[23px] rounded-md border-2 border-[#b9dcd9] bg-[#5b8583] text-[#e0f0ee] pl-2 text-[18px] leading-[18px] whitespace-nowrap overflow-hidden' : kind === 'red' ? 'absolute top-px h-[23px] rounded-[9px] border border-[#b58a8d] bg-[#861f2a] text-[#f0dede] pl-[9px] text-[18px] leading-[20px] whitespace-nowrap overflow-hidden' : 'absolute top-px h-[23px] rounded-[9px] border border-[#6d9b98] bg-[#5b8583] text-[#cfe6e3] pl-[9px] text-[18px] leading-[20px] whitespace-nowrap overflow-hidden'}" style="left:${x}px;width:${w}px">${text}</div>`).join('')}`;

        // Master section
        document.getElementById('masterpan').innerHTML = panKnob('Master pan', 0);
        document.getElementById('masterfader').innerHTML = `<div class="h-[345px]">${fader(71, 106)}</div>`;
        const col = (vals, cls) => `<div class="${cls}">${vals.map(v => `<div>${v}</div>`).join('')}</div>`;
        document.getElementById('scale').innerHTML =
            col(['12', '6', '0-', '6-', '12-', '18-', '24-', '30-', '36-', '42-'], 'leading-[31px]')
            + col(['-6-', '-12-', '-18-', '-24-', '-30-', '-36-', '-42-', '-48-', '-54-'], 'leading-[31px] text-center pt-[21px]')
            + col(['12', '6', '-0', '-6', '-12', '-18', '-24', '-30', '-36', '-42'], 'leading-[31px] text-right');
        document.getElementById('masterbuttons').innerHTML = `
            <button class="w-[34px] h-[34px] rounded-[3px] border-2 border-[#181818] bg-linear-to-b from-[#858989] to-[#565a5a] grid place-items-center" aria-label="Mono"><svg class="w-6 h-4" viewBox="0 0 24 16" fill="none" stroke="#3c3f3f" stroke-width="1.500"><circle cx="8" cy="8" r="7" /><circle cx="16" cy="8" r="7" /></svg></button>
            <span class="leading-[27px]">MONO</span>${muteBtn(false)}${soloBtn}
            <span class="mt-[10px] h-[34px]">${routeBtn('#f5e23a')}</span><span class="leading-[24px]">ROUTE</span>
            <span class="mt-[7px]">${fxCol(false)}</span><span class="mt-[10px] h-[34px]">${envBtn}</span><span class="leading-[30px]">TRIM</span>
            <button class="w-[34px] h-[34px] rounded-[3px] border-2 border-[#111] bg-[#2b2b2b] text-[24px] leading-none font-bold font-['Liberation_Serif',serif]">i</button>`;

        // Mixer strips
        document.getElementById('strips').innerHTML = tracks.map(t => `
            <div class="${t.cut ? 'w-[29px] shrink-0 overflow-hidden' : 'flex-1 min-w-0'}"><div class="${t.cut ? 'w-[150px]' : 'w-full'}">
                <div class="${t.selected ? 'h-[137px] pl-[9px] pr-[11px] pt-[11px] bg-[#a0a5a4] border-r-2 border-[#2c2e2d] border-b' : 'h-[137px] pl-[9px] pr-[11px] pt-[11px] bg-[#808886] border-r-2 border-[#2c2e2d] border-b'}">
                    <div class="relative h-[34px] rounded-l-md rounded-r-full bg-[#616766]">
                        <select class="w-full h-full pl-[6px] text-[16px] text-[#ddd] appearance-none" aria-label="Input channel track ${t.n}"><option>1</option></select>
                        <span class="absolute right-[3px] top-[3px] size-7 rounded-full bg-[#828a88] grid place-items-center pointer-events-none"><span class="border-x-7 border-x-transparent border-t-10 border-t-[#dfe1e0]"></span></span>
                    </div>
                    <div class="flex justify-between mt-[7px]">
                        <div class="relative w-[68px] h-[33px] rounded-l-md rounded-r-full bg-[#616766]">
                            <select class="w-full h-full pl-3 pb-[2px] text-[18px] text-[#ddd] appearance-none" aria-label="Input track ${t.n}"><option>in</option></select>
                            <span class="absolute right-[3px] top-[3px] size-[27px] rounded-full bg-[#828a88] grid place-items-center pointer-events-none"><span class="border-x-7 border-x-transparent border-t-10 border-t-[#dfe1e0]"></span></span>
                        </div>
                        <div class="w-[34px] h-[33px] bg-[#616766] grid place-items-center"><button class="w-[27px] h-[27px] rounded-[3px] border-2 border-[#3c4040] bg-linear-to-b from-[#9ca2a1] to-[#858b8a] text-[13px] leading-[11px] font-bold text-[#333] font-[Lato,sans-serif]">IN<br>FX</button></div>
                    </div>
                    <div class="flex justify-center mt-[6px]">${panKnob('Pan track ' + t.n, t.pan)}</div>
                </div>
                <div class="bg-[#252525] border-r-2 border-[#141414]">
                    <div class="${t.folder ? 'h-[283px] flex' : 'h-[266px] flex'}">
                        <div class="w-[50px] shrink-0 flex flex-col justify-between pb-[15px]">
                            ${badge(t) ? `<div class="pl-3 pt-[9px]">${badge(t)}</div>` : '<div class="pl-[14px] pt-2 text-[15px] leading-5 font-bold text-[#636363]">-inf</div>'}
                            <svg class="ml-[15px] w-[14px] h-6" viewBox="0 0 14 24" fill="#777"><path d="M0 7h6l8-7v24l-8-7H0z" /></svg>
                        </div>
                        <div class="w-10 shrink-0 flex flex-col items-center pt-[25px] pb-[10px]">
                            <div class="w-full flex-1">${fader(t.cap, t.folder ? 63 : 58)}</div>
                            <div class="mt-[21px]">${rec(t.n)}</div>
                        </div>
                        <div class="ml-[14px] w-[34px] shrink-0 pt-[10px] flex flex-col">
                            ${muteBtn(t.muted)}${soloBtn}
                            <div class="mt-[10px] h-[34px]">${routeBtn('#4f4f30')}</div><div class="mt-[13px]">${fxCol(t.fx)}</div><div class="mt-[11px]">${envBtn}</div>
                        </div>
                    </div>
                    <div class="${t.selected ? 'h-[41px] bg-[#d0d3d2] text-[#222] text-[19px] leading-[39px] px-1 flex justify-center' : 'h-[41px] text-[19px] leading-[39px] px-1 flex justify-center'}"><span class="overflow-hidden whitespace-nowrap">${t.short || t.name}</span>${t.tail || ''}</div>
                </div>
                <div class="${t.last ? 'relative h-[34px] mr-1 rounded-r-[12px_50%] bg-[#808886] flex justify-center items-center text-[17px] text-[#e5e5e5]' : t.folder ? 'relative h-[34px] mr-px pl-[26px] bg-[#808886] flex justify-center items-center text-[17px] text-[#e5e5e5]' : 'relative h-[34px] pr-[5px] border-r border-[#2c2e2d] bg-[#808886] flex justify-center items-center text-[17px] text-[#e5e5e5]'}">
                    <span class="relative">${t.n}<span class="${t.selected ? 'absolute left-1/2 -translate-x-1/2 -top-[11px] size-3 rounded-full bg-white border-2 border-[#222]' : 'absolute left-1/2 -translate-x-1/2 -top-[5px] w-3 h-[6px] rounded-b-full bg-[#252525]'}"></span></span>
                    ${t.folder ? `<span class="absolute left-[9px] top-[5px]">${folderIcon}</span>` : ''}
                </div>
            </div></div>`).join('');
    </script>
</body>

</html>
